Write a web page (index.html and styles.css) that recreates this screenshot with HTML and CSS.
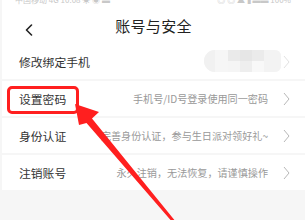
FILE: index.html
```html
<!DOCTYPE html>
<html lang="zh">
<head>
<meta charset="utf-8">
<link rel="stylesheet" href="styles.css">
</head>
<body>
<div class="page">
  <div class="status">
    <span class="st-left">中国移动 4G 10:08 ☀ ◉ ▬</span>
    <span class="st-right">◎ ◎ ▲ ▮ ▬▬ 100%</span>
  </div>
  <div class="header">
    <svg class="back" width="8" height="12" viewBox="0 0 8 12"><path d="M6.5 1 L1.5 6 L6.5 11" fill="none" stroke="#222" stroke-width="1.6" stroke-linecap="round" stroke-linejoin="round"/></svg>
    <div class="title">账号与安全</div>
  </div>
  <div class="list">
    <div class="row">
      <span class="label">修改绑定手机</span>
      <span class="masked">
        <i class="b1"></i><i class="b2"></i><i class="b3"></i><i class="b4"></i><i class="b5"></i><i class="b6"></i>
      </span>
      <svg class="chev faint" width="7" height="14" viewBox="0 0 7 14"><path d="M1 1 L6 7 L1 13" fill="none" stroke-width="1"/></svg>
    </div>
    <div class="row">
      <span class="label">设置密码</span>
      <span class="value">手机号/ID号登录使用同一密码</span>
      <svg class="chev" width="7" height="14" viewBox="0 0 7 14"><path d="M1 1 L6 7 L1 13" fill="none" stroke-width="1"/></svg>
    </div>
    <div class="row">
      <span class="label">身份认证</span>
      <span class="value">完善身份认证，参与生日派对领好礼~</span>
      <svg class="chev" width="7" height="14" viewBox="0 0 7 14"><path d="M1 1 L6 7 L1 13" fill="none" stroke-width="1"/></svg>
    </div>
    <div class="row">
      <span class="label">注销账号</span>
      <span class="value">永久注销，无法恢复，请谨慎操作</span>
      <svg class="chev" width="7" height="14" viewBox="0 0 7 14"><path d="M1 1 L6 7 L1 13" fill="none" stroke-width="1"/></svg>
    </div>
  </div>
  <svg class="annot" width="305" height="220" viewBox="0 0 305 220">
    <rect x="8.5" y="87.5" width="69" height="25" rx="3.5" fill="none" stroke="#ff1f1f" stroke-width="3"/>
    <polygon points="75,104 99,112 92,118.5 176,222 174,224 86.5,123 79,125" fill="#ff1f1f"/>
  </svg>
</div>
</body>
</html>
```

FILE: styles.css
```css
html, body {
  margin: 0;
  padding: 0;
}
body {
  width: 305px;
  height: 220px;
  overflow: hidden;
  background: #f6f6f6;
  font-family: "Noto Sans CJK SC", "Noto Sans", sans-serif;
}
.page {
  position: relative;
  width: 305px;
  height: 220px;
  padding-left: 2px;
  box-sizing: border-box;
}
.status {
  height: 5px;
  overflow: hidden;
  background: #fff;
  display: flex;
  justify-content: space-between;
  padding: 0 14px 0 13px;
  font-size: 8px;
  line-height: 8px;
  color: #c8c8c8;
}
.status span {
  margin-top: -4px;
}
.header {
  height: 39px;
  background: #fff;
  position: relative;
  display: flex;
  align-items: center;
  justify-content: center;
  padding-top: 3px;
  box-sizing: border-box;
}
.back {
  position: absolute;
  left: 23px;
  top: 19px;
}
.title {
  font-size: 15px;
  color: #222;
  letter-spacing: 0.3px;
  line-height: 20px;
}
.list {
  display: flex;
  flex-direction: column;
  gap: 2px;
}
.row {
  height: 35px;
  background: #fff;
  display: flex;
  align-items: center;
  padding: 0 15px 0 17px;
}
.row:first-child {
  height: 35px;
}
.label {
  font-size: 11.8px;
  color: #333;
  flex: 1;
  white-space: nowrap;
}
.value {
  font-size: 10.1px;
  color: #999;
  white-space: nowrap;
  margin-right: 15px;
}
.chev {
  stroke: #b8b8b8;
}
.chev.faint {
  stroke: #e2e2e2;
}
.masked {
  display: flex;
  height: 22px;
  width: 77px;
  margin-right: 2px;
  margin-top: -2px;
  border-radius: 11px 6px 6px 11px;
  overflow: hidden;
  background: #f6f6f6;
}
.masked i {
  display: block;
  height: 100%;
}
.masked .b1 { width: 11px; background: #f1f1f1; }
.masked .b2 { width: 13px; background: #f6f6f6; }
.masked .b3 { width: 12px; background: linear-gradient(#eaeaea 50%, #f5f5f5 50%); }
.masked .b4 { width: 12px; background: linear-gradient(#e6e6e6 50%, #eeeeee 50%); }
.masked .b5 { width: 12px; background: linear-gradient(#ebebeb 50%, #f8f8f8 50%); }
.masked .b6 { width: 17px; background: #f3f3f3; }
.annot {
  position: absolute;
  left: 0;
  top: 0;
  pointer-events: none;
}
```
